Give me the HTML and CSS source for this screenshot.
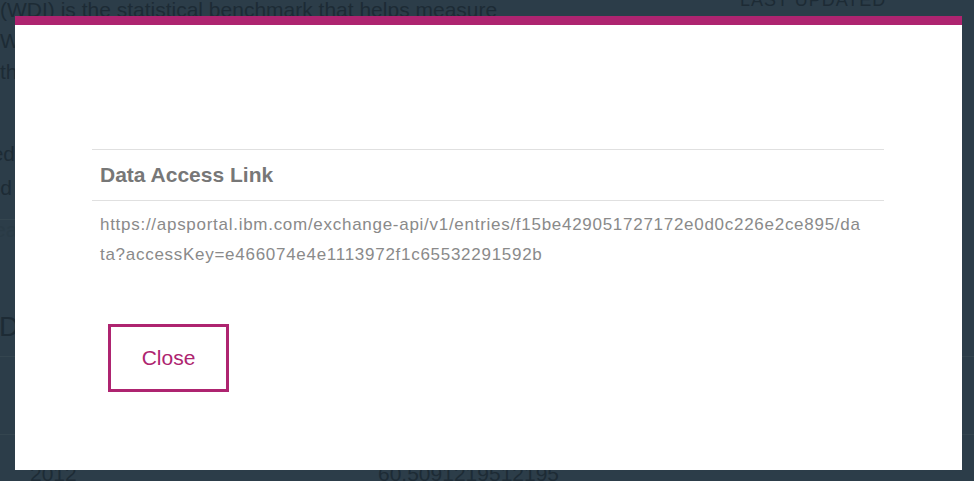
FILE: index.html
```html
<!DOCTYPE html>
<html>

	<head>
		<meta charset="UTF-8">
		<title>Data Access Link</title>
		<link rel="stylesheet" href="styles.css">
	</head>

	<body>
		<div class="page">
			<div class="intro">
				<p class="lead">(WDI) is the statistical benchmark that helps measure<br/>Which are the world's economies and how to<br/>the pace of development over time</p>
				<div class="updated">
					<div>LAST UPDATED</div>
					<div>May 22, 2019</div>
				</div>
			</div>
			<div class="meta">
				<div class="meta-row">Published</div>
				<div class="meta-row shifted">Licensed</div>
			</div>
			<div class="meta-faint">Areas</div>
			<h2 class="section">Data preview</h2>
			<div class="rows">
				<div class="row"></div>
				<div class="row last"><span class="year">2012</span><span class="value">60.5091219512195</span></div>
			</div>
		</div>

		<div class="overlay">
			<div class="modal">
				<table class="link-table">
					<tr><th>Data Access Link</th></tr>
					<tr><td>https://apsportal.ibm.com/exchange-api/v1/entries/f15be429051727172e0d0c226e2ce895/da<br/>ta?accessKey=e466074e4e1113972f1c65532291592b</td></tr>
				</table>
				<button class="close">Close</button>
			</div>
		</div>
	</body>

</html>
```

FILE: styles.css
```css
html,
body {
	margin: 0;
	height: 100%;
	overflow: hidden;
}

body {
	background: #2c3d49;
	color: #1d2b35;
	font-family: "Liberation Sans", Arial, sans-serif;
}

.page {
	margin-top: -6px;
}

.intro {
	display: flex;
	justify-content: space-between;
	height: 93px;
}

.lead {
	margin: 0;
	font-size: 21px;
	line-height: 31px;
	white-space: nowrap;
}

.updated {
	width: 234px;
	margin-top: -6px;
	letter-spacing: 1px;
	font-size: 18px;
	line-height: 24px;
}

.meta {
	margin-top: 50px;
	width: 300px;
	margin-left: -285px;
	text-align: right;
	padding-bottom: 14px;
	border-bottom: 1px solid #34454f;
}

.meta-row {
	font-size: 21px;
	line-height: 34px;
}

.meta-row.shifted {
	margin-right: 3px;
}

.meta-faint {
	color: #293a45;
	font-size: 21px;
	line-height: 20px;
	margin-left: -27px;
}

.section {
	margin: 67px 0 0 -1px;
	font-size: 28px;
	font-weight: normal;
	line-height: 40px;
	padding-bottom: 9px;
	border-bottom: 1px solid #34454f;
}

.row {
	height: 77px;
	border-bottom: 1px solid #34454f;
	font-size: 21px;
	line-height: 24px;
}

.row.last {
	border-bottom: 0;
	box-sizing: border-box;
	height: 48px;
	padding-top: 27px;
	display: flex;
}

.year {
	padding-left: 30px;
	width: 348px;
}

.overlay {
	position: fixed;
	top: 0;
	left: 0;
	right: 0;
	bottom: 0;
}

.modal {
	position: absolute;
	left: 15px;
	top: 16px;
	width: 947px;
	height: 454px;
	background: #fff;
	border-top: 9px solid #ae2470;
	padding: 124px 78px 0 77px;
	box-sizing: border-box;
}

.link-table {
	width: 100%;
	border-collapse: collapse;
}

.link-table th,
.link-table td {
	border-top: 1px solid #e0e0e0;
	text-align: left;
	padding: 8px;
}

.link-table th {
	font-size: 21px;
	color: #777;
	line-height: 34px;
	height: 50px;
	box-sizing: border-box;
}

.link-table td {
	font-size: 17px;
	letter-spacing: 0.72px;
	color: #8a8a8a;
	line-height: 30px;
	word-break: break-all;
	padding: 9px 8px 8px 8px;
}

.close {
	margin: 46px 0 0 16px;
	width: 121px;
	height: 68px;
	background: #fff;
	border: 3px solid #ae2470;
	color: #ae2470;
	font-family: "Liberation Sans", Arial, sans-serif;
	font-size: 21px;
	cursor: pointer;
}
```
